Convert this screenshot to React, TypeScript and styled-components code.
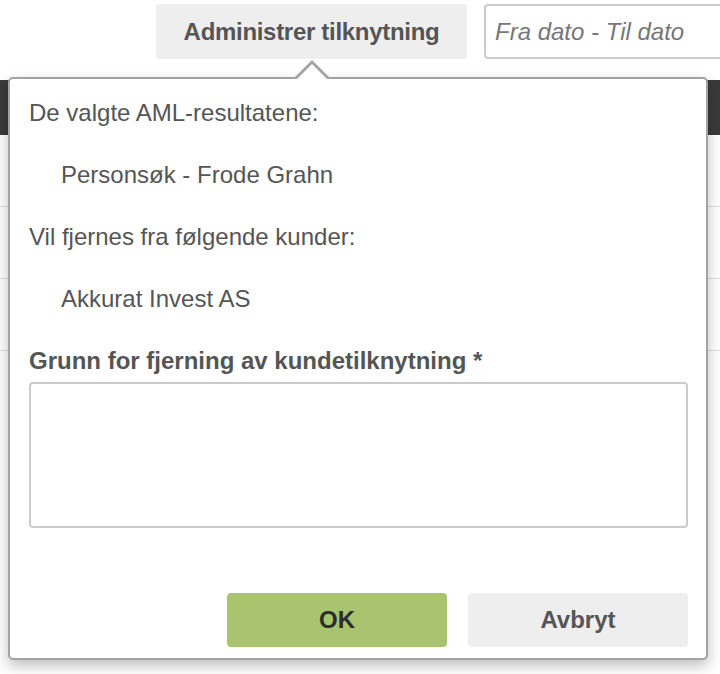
import React from 'react';
import styled, { createGlobalStyle } from 'styled-components';

const GlobalStyle = createGlobalStyle`
  html, body {
    margin: 0;
    padding: 0;
    background: #fff;
  }
  body {
    font-family: "Liberation Sans", Arial, Helvetica, sans-serif;
    color: #555;
    overflow: hidden;
  }
`;

const Page = styled.div`
  position: relative;
  width: 720px;
  height: 674px;
  overflow: hidden;
`;

const Toolbar = styled.div`
  display: flex;
  align-items: stretch;
  gap: 17px;
  padding: 4px 0 0 156px;
  height: 55px;
`;

const ToolButton = styled.button`
  flex: 0 0 311px;
  border: none;
  border-radius: 3px;
  background: #eeeeee;
  color: #555;
  font-family: inherit;
  font-size: 24px;
  font-weight: bold;
  letter-spacing: -0.3px;
  cursor: pointer;
`;

const DateInput = styled.input`
  flex: 0 0 260px;
  box-sizing: border-box;
  border: 2px solid #cccccc;
  border-radius: 4px;
  padding: 0 9px;
  font-family: inherit;
  font-size: 24px;
  font-style: italic;
  color: #555;
  &::placeholder {
    color: #777;
  }
`;

const Table = styled.div`
  margin-top: 21px;
  display: flex;
  flex-direction: column;
`;

const TableHead = styled.div`
  height: 55px;
  background: #3a3a3a;
`;

const TableRow = styled.div`
  height: 71px;
  border-bottom: 1px solid #dedede;
  background: #fff;
`;

const Popover = styled.div`
  position: absolute;
  top: 77px;
  left: 8px;
  width: 700px;
  height: 583px;
  box-sizing: border-box;
  background: #fff;
  border: 2px solid #a3a3a3;
  border-radius: 5px;
  box-shadow: 0 6px 14px rgba(0, 0, 0, 0.25);
  padding: 19px 18px 11px 19px;
  display: flex;
  flex-direction: column;

  &::before,
  &::after {
    content: '';
    position: absolute;
    width: 0;
    height: 0;
    border-style: solid;
    border-color: transparent;
  }
  &::before {
    top: -19px;
    left: 285px;
    border-width: 0 17px 17px 17px;
    border-bottom-color: #a3a3a3;
  }
  &::after {
    top: -15px;
    left: 287px;
    border-width: 0 15px 15px 15px;
    border-bottom-color: #fff;
  }
`;

const Text = styled.p<{ $indent?: boolean }>`
  margin: 0 0 32px 0;
  padding-left: ${(p) => (p.$indent ? '32px' : '0')};
  font-size: 24px;
  line-height: 30px;
  color: #555;
`;

const Label = styled.label`
  display: block;
  font-size: 24px;
  line-height: 30px;
  font-weight: bold;
  color: #555;
  margin-bottom: 6px;
`;

const TextArea = styled.textarea`
  display: block;
  width: 100%;
  height: 146px;
  box-sizing: border-box;
  border: 2px solid #cccccc;
  border-radius: 4px;
  resize: none;
  font-family: inherit;
  font-size: 24px;
`;

const Actions = styled.div`
  margin-top: auto;
  display: flex;
  justify-content: flex-end;
  gap: 21px;
`;

const ActionButton = styled.button<{ $primary?: boolean }>`
  width: 220px;
  height: 54px;
  border: none;
  border-radius: 4px;
  background: ${(p) => (p.$primary ? '#a8c46e' : '#eeeeee')};
  color: ${(p) => (p.$primary ? '#2d2d2d' : '#555')};
  font-family: inherit;
  font-size: 24px;
  font-weight: bold;
  cursor: pointer;
`;

export default function App() {
  return (
    <Page>
      <GlobalStyle />
      <Toolbar>
        <ToolButton>Administrer tilknytning</ToolButton>
        <DateInput placeholder="Fra dato - Til dato" />
      </Toolbar>
      <Table>
        <TableHead />
        <TableRow />
        <TableRow />
        <TableRow />
      </Table>
      <Popover>
        <Text>De valgte AML-resultatene:</Text>
        <Text $indent>Personsøk - Frode Grahn</Text>
        <Text>Vil fjernes fra følgende kunder:</Text>
        <Text $indent>Akkurat Invest AS</Text>
        <Label>Grunn for fjerning av kundetilknytning *</Label>
        <TextArea />
        <Actions>
          <ActionButton $primary>OK</ActionButton>
          <ActionButton>Avbryt</ActionButton>
        </Actions>
      </Popover>
    </Page>
  );
}
